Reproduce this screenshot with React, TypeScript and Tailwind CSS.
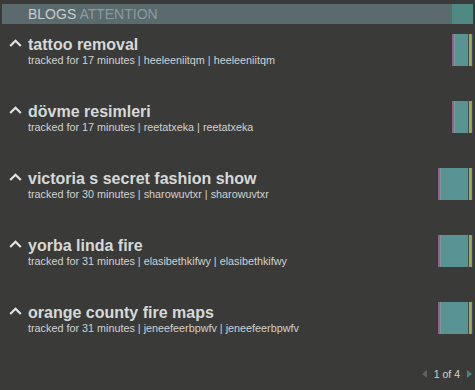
import React from "react";

type Item = { title: string; mins: number; user: string; wide: boolean };

const items: Item[] = [
  { title: "tattoo removal", mins: 17, user: "heeleeniitqm", wide: false },
  { title: "dövme resimleri", mins: 17, user: "reetatxeka", wide: false },
  { title: "victoria s secret fashion show", mins: 30, user: "sharowuvtxr", wide: true },
  { title: "yorba linda fire", mins: 31, user: "elasibethkifwy", wide: true },
  { title: "orange county fire maps", mins: 31, user: "jeneefeerbpwfv", wide: true },
];

function Bar({ wide }: { wide: boolean }) {
  return (
    <div className={`flex h-[32px] ${wide ? "w-[36px]" : "w-[22px]"}`}>
      <div className="w-px bg-[#2f3a3a]" />
      <div className="w-[2px] bg-[#9a5f8e]" />
      <div className="w-px bg-[#7a9a98]" />
      <div className="flex-1 bg-[#599393]" />
      <div className="w-px bg-[#3f5252]" />
      <div className="w-[2px] bg-[#a6a653]" />
      <div className="w-px bg-[#6ea39d]" />
      <div className="w-px bg-[#405050]" />
    </div>
  );
}

function Caret() {
  return (
    <svg width="13" height="8" viewBox="0 0 13 8" className="block">
      <path d="M1.2 7 L6.5 1.7 L11.8 7" fill="none" stroke="#e2e4e4" strokeWidth="2.2" />
    </svg>
  );
}

export default function App() {
  return (
    <div
      className="w-[475px] h-[390px] bg-[#3a3b38] overflow-hidden flex flex-col"
      style={{ fontFamily: '"Liberation Sans", Arial, sans-serif' }}
    >
      <div className="mx-[2px] mt-[4px] h-[20px] bg-[#5b6a6d] flex">
        <div className="pl-[26px] text-[14px] leading-[20px]">
          <span className="text-[#c6cece]">BLOGS</span>{" "}
          <span className="text-[#8c9c9e]">ATTENTION</span>
        </div>
        <div className="ml-auto w-[21px] bg-[#4e8984]" />
      </div>

      <div className="flex flex-col gap-[34px] pt-[10px] pr-[2px]">
        {items.map((it) => (
          <div key={it.title} className="flex items-start h-[33px]">
            <div className="flex items-start mt-[2px] flex-1">
              <div className="w-[28px] pl-[9px] pt-[3px]">
                <Caret />
              </div>
              <div className="flex flex-col">
                <div className="text-[16px] leading-[18px] font-bold text-[#d6d9d9]">
                  {it.title}
                </div>
                <div className="text-[10.8px] leading-[13px] text-[#d0d2d2]">
                  tracked for {it.mins} minutes | {it.user} | {it.user}
                </div>
              </div>
            </div>
            <Bar wide={it.wide} />
          </div>
        ))}
      </div>

      <div className="flex justify-end items-center mt-[33px] pr-[3px] h-[12px] gap-[7px]">
        <svg width="5" height="8" viewBox="0 0 5 8">
          <path d="M5 0 L0 4 L5 8 Z" fill="#5c6362" />
        </svg>
        <span className="text-[10.5px] leading-[12px] text-[#d2d4d4]">1 of 4</span>
        <svg width="5" height="8" viewBox="0 0 5 8">
          <path d="M0 0 L5 4 L0 8 Z" fill="#478483" />
        </svg>
      </div>
    </div>
  );
}
